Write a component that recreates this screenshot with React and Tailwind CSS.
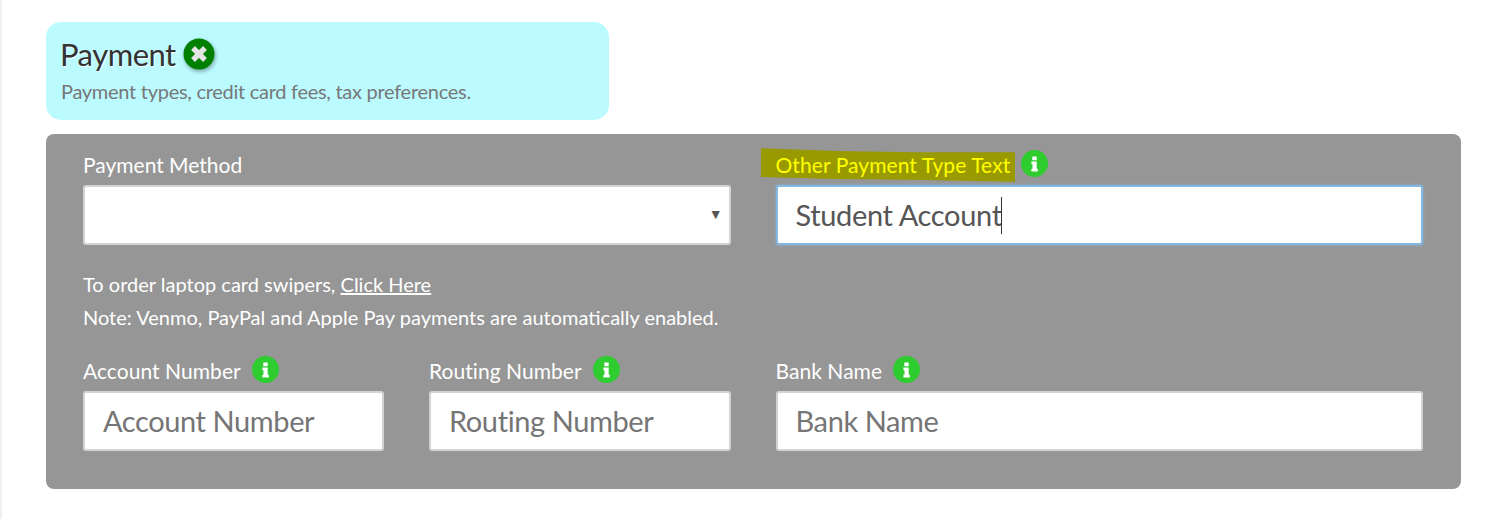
import { useState } from 'react'

function Info({ className = '' }) {
  return (
    <svg width="27" height="27" viewBox="0 0 27 27" className={`shrink-0 ${className}`}>
      <circle cx="13.5" cy="13.5" r="13.5" fill="#2ecc2e" />
      <path fill="#fff" d="M11.3 6.6h4.4v3.7h-4.4zM10.4 11.6h5.3v7.2h1.1v2.7h-6.4v-2.7h1.1v-4.5h-1.1z" />
    </svg>
  )
}

function CloseIcon() {
  return (
    <svg width="32" height="32" viewBox="0 0 32 32" className="ml-[7px] -mt-[1px] drop-shadow-[1px_2px_2px_rgba(0,0,0,0.35)]">
      <circle cx="16" cy="16" r="15.5" fill="#008000" />
      <path d="M10 10l12 12M22 10l-12 12" stroke="#e4e4e4" strokeWidth="5.4" />
    </svg>
  )
}

function TextField({ label }) {
  return (
    <div>
      <div className="flex items-center h-[41px]">
        <label className="text-[21px] tracking-[0.05px] text-white">{label}</label>
        <Info className="ml-[11px] -mt-[2px]" />
      </div>
      <input
        readOnly
        placeholder={label}
        className="block w-full h-[60px] px-[18px] pb-[2px] bg-white border-2 border-[#d3d3d3] rounded-[3px] text-[29px] tracking-[-0.4px] text-[#555] placeholder:text-[#757575] outline-none"
      />
    </div>
  )
}

export default function App() {
  const [otherType, setOtherType] = useState('Student Account')

  return (
    <div className="min-h-[519px] bg-white border-l-2 border-[#f0f0f0] pl-[44px] pr-[37px] pt-[22px] font-['Lato','Noto_Sans',sans-serif]">
      <div className="w-[563px] h-[98px] bg-[#bbfbff] rounded-[15px] pl-[15px] pt-[14px]">
        <div className="flex items-center h-[36px]">
          <h1 className="-ml-[1px] text-[31px] leading-none tracking-[-0.5px] text-[#333] [text-shadow:1px_1px_1px_#fff]">Payment</h1>
          <CloseIcon />
        </div>
        <p className="mt-[7px] text-[20px] leading-[24px] tracking-[-0.28px] text-[#777]">Payment types, credit card fees, tax preferences.</p>
      </div>

      <div className="mt-[14px] h-[355px] bg-[#969696] rounded-[8px] pl-[37px] pr-[38px] pt-[11px]">
        <div className="grid grid-cols-2 gap-x-[45px]">
          <div>
            <div className="flex items-center h-[40px]">
              <label className="text-[21px] text-white">Payment Method</label>
            </div>
            <div className="relative">
              <select className="block w-full h-[60px] bg-white border-2 border-[#d3d3d3] rounded-[3px] appearance-none outline-none" />
              <span className="absolute right-[8px] top-[18px] text-[14px] text-[#555]">▼</span>
            </div>
          </div>
          <div>
            <div className="flex items-center h-[40px]">
              <label className="relative z-0 text-[21px] tracking-[0.08px] text-[#ffff00]">
                <span className="absolute -z-10 left-[-15px] right-[-5px] top-[-1px] bottom-[-1px] bg-[#999900] [clip-path:polygon(0_0,30%_8%,60%_12%,100%_12%,100%_100%,60%_94%,30%_92%,0_86%)]" />
                Other Payment Type Text
              </label>
              <Info className="ml-[11px] -mt-[3px]" />
            </div>
            <div className="relative">
              <input
                value={otherType}
                onChange={e => setOtherType(e.target.value)}
                className="block w-full h-[60px] px-[18px] pb-[2px] bg-white border-2 border-[#85b7e2] rounded-[3px] shadow-[0_0_3px_#85b7e2] text-[29px] tracking-[-0.35px] text-[#555] outline-none"
              />
              <span className="absolute left-[225px] top-[12px] w-px h-[37px] bg-[#333]" />
            </div>
          </div>
        </div>

        <div className="mt-[23px] text-[20px] leading-[33px] text-white">
          <p>To order laptop card swipers, <a className="underline">Click Here</a></p>
          <p>Note: Venmo, PayPal and Apple Pay payments are automatically enabled.</p>
        </div>

        <div className="mt-[16px] grid grid-cols-2 gap-x-[45px]">
          <div className="grid grid-cols-[301px_1fr] gap-x-[45px]">
            <TextField label="Account Number" />
            <TextField label="Routing Number" />
          </div>
          <TextField label="Bank Name" />
        </div>
      </div>
    </div>
  )
}
